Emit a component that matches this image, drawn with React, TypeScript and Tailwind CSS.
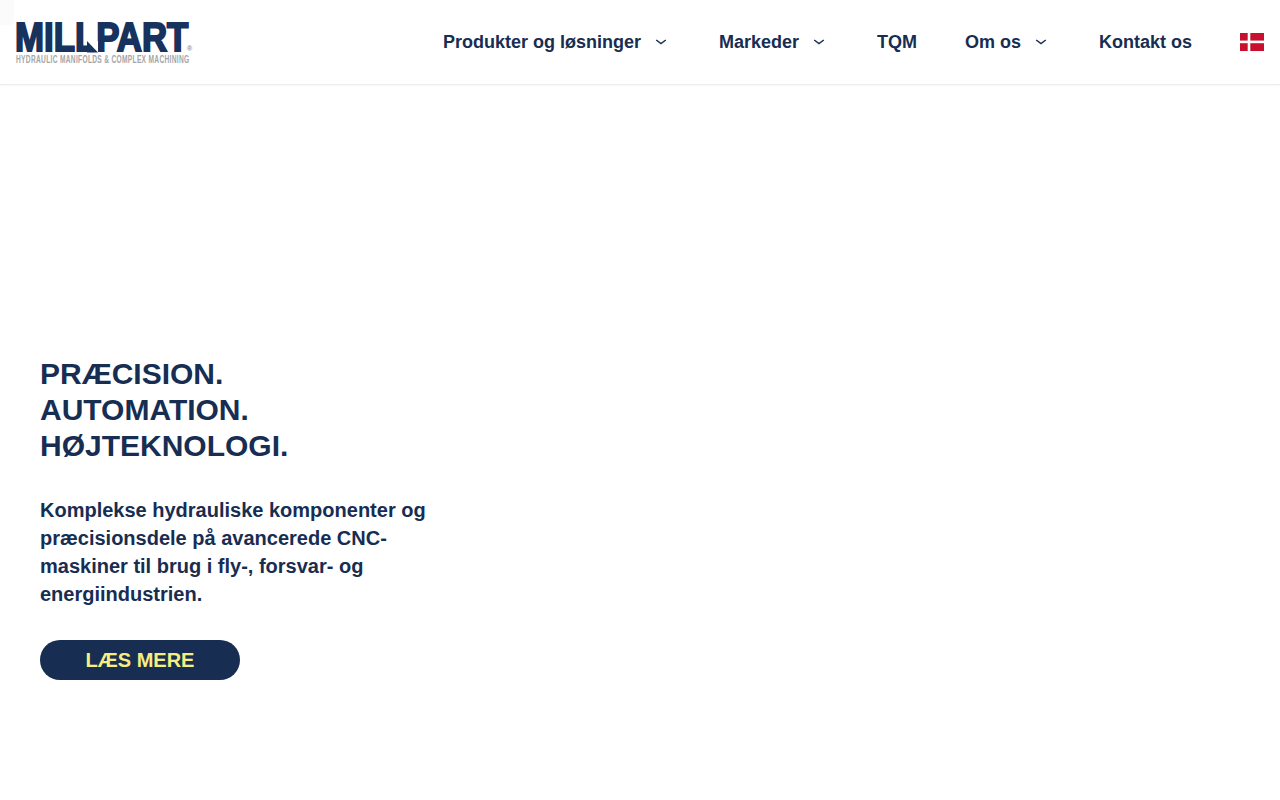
const navy = "text-[#172d52]";

function Chevron() {
  return (
    <svg width="16" height="16" viewBox="0 0 16 16" fill="none" className="ml-3 mr-[2px] shrink-0">
      <path d="M3.2 6 8 9.5 12.8 6" stroke="#172d52" strokeWidth="1.5" />
    </svg>
  );
}

function NavItem({ label, caret }: { label: string; caret?: boolean }) {
  return (
    <a className="flex items-center text-[18px] leading-[28px] font-bold text-[#172d52]">
      {label}
      {caret && <Chevron />}
    </a>
  );
}

function Logo() {
  return (
    <div className="relative w-[176px] h-[44px]">
      <div className="absolute left-[-1.4px] top-0 origin-top-left scale-x-[0.849] whitespace-nowrap text-[41px] leading-[34px] font-bold text-[#17325c] [-webkit-text-stroke:2px_#17325c]">
        MILLPART
      </div>
      <svg width="11" height="12" viewBox="0 0 11 12" className="absolute left-[71px] top-[21px]">
        <rect width="11" height="12" fill="#ffffff" />
        <path d="M0 0 11 11.4 0 11.4Z" fill="#17325c" />
      </svg>
      <div className="absolute left-[171px] top-[25px] text-[7px] leading-[8px] font-bold text-[#7f8fa8]">®</div>
      <div className="absolute left-0 bottom-0 origin-bottom-left scale-x-[0.603] whitespace-nowrap text-[11px] leading-[10px] font-bold tracking-[0.5px] text-[#a3a6a8]">
        HYDRAULIC MANIFOLDS &amp; COMPLEX MACHINING
      </div>
    </div>
  );
}

function Flag() {
  return (
    <svg width="24" height="18" viewBox="0 0 24 18" className="shrink-0">
      <rect width="24" height="18" fill="#c8102e" />
      <rect x="7.7" width="2.6" height="18" fill="#ffffff" />
      <rect y="7.6" width="24" height="2.6" fill="#ffffff" />
    </svg>
  );
}

export default function App() {
  return (
    <div className="relative h-[800px] bg-white font-['Liberation_Sans',Arial,sans-serif] overflow-hidden">
      <div className="absolute left-0 top-0 h-[25px] w-[14px] rounded-br-[4px] bg-[#fbfbfb]" />
      <header className="relative flex h-[85px] items-center justify-between border-b border-[#ececec] pl-4 pr-4 shadow-[0_1px_2px_rgba(0,0,0,0.04)]">
        <Logo />
        <nav className="flex items-center gap-12">
          <NavItem label="Produkter og løsninger" caret />
          <NavItem label="Markeder" caret />
          <NavItem label="TQM" />
          <NavItem label="Om os" caret />
          <NavItem label="Kontakt os" />
          <Flag />
        </nav>
      </header>
      <main className={`pl-10 pt-[271px] ${navy}`}>
        <h1 className="w-[400px] text-[30px] leading-[36px] font-bold">
          PRÆCISION.
          <br />
          AUTOMATION.
          <br />
          HØJTEKNOLOGI.
        </h1>
        <p className="mt-8 w-[400px] text-[20px] leading-[28px] font-bold">
          Komplekse hydrauliske komponenter og præcisionsdele på avancerede CNC-maskiner til brug i fly-, forsvar- og energiindustrien.
        </p>
        <a className="mt-8 flex h-10 w-[200px] items-center justify-center rounded-full bg-[#172d52] text-[20px] font-bold text-[#f7ee7f]">
          LÆS MERE
        </a>
      </main>
    </div>
  );
}
